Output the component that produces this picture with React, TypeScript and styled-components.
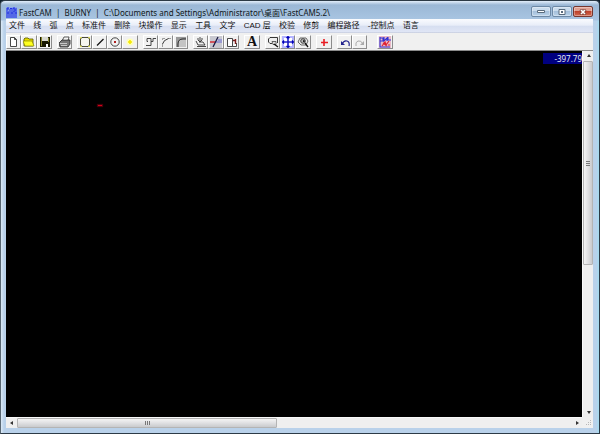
import React from "react";
import styled, { createGlobalStyle, css } from "styled-components";

const GlobalStyle = createGlobalStyle`
  * { box-sizing: border-box; }
  html, body, #root { height: 100%; margin: 0; }
  body {
    background: #10202c;
    overflow: hidden;
    font-family: "Noto Sans", "Noto Sans CJK SC", sans-serif;
  }
  button { font: inherit; padding: 0; margin: 0; }
`;

const Window = styled.div`
  height: 100%;
  display: flex;
  flex-direction: column;
  padding: 0 6px 5px 5px;
  border: 1px solid #2c3a46;
  border-left-color: #5a6873;
  border-radius: 5px 5px 0 0;
  background:
    linear-gradient(#e2eefa, #9bb8d6 4px, #a9c5e2 19px, transparent 20px) top / 100% 20px no-repeat,
    linear-gradient(90deg, #dceaf7 0, #b9d1ea 3px, #b9d1ea calc(100% - 3px), #a5dcf0 100%);
`;

const TitleBar = styled.header`
  flex: none;
  height: 18px;
  display: flex;
  align-items: center;
`;

const Title = styled.h1`
  flex: 1;
  min-width: 0;
  margin: 4px 0 0 2px;
  overflow: hidden;
  white-space: pre;
  font-size: 8px;
  line-height: 13px;
  font-weight: 400;
  color: #101820;
`;

const Logo = styled.svg`
  flex: none;
  width: 11px;
  height: 11px;
  margin-top: 4px;
`;

const Controls = styled.div`
  display: flex;
  gap: 1px;
  margin-top: 3px;
`;

const ControlButton = styled.button<{ $close?: boolean }>`
  width: 20px;
  height: 11px;
  display: flex;
  align-items: center;
  justify-content: center;
  border: 1px solid #6d89a6;
  border-radius: 2px;
  box-shadow: inset 0 0 0 1px #ffffff55;
  background: linear-gradient(#c9dcee 45%, #a6c0db 50%, #b9d2e9);
  ${(p) => p.$close && css`
    border-color: #77372f;
    background: linear-gradient(#e0a092 45%, #bd422c 50%, #d2694f);
  `}
`;

const Menu = styled.nav`
  flex: none;
  height: 14px;
  background: linear-gradient(#fafbfe, #e8edf8 45%, #d6def0 50%, #dfe5f5 90%, #c4cadb);
`;

const MenuList = styled.div`
  max-width: 417px;
  padding: 0 4px 0 3px;
  display: flex;
  justify-content: space-between;
`;

const MenuItem = styled.button`
  border: 0;
  background: none;
  font-family: "Liberation Sans", "Noto Sans CJK SC", sans-serif;
  font-size: 8px;
  line-height: 13px;
  white-space: nowrap;
  color: #101010;
`;

const Toolbar = styled.div`
  flex: none;
  height: 18px;
  padding: 2px 0;
  display: flex;
  align-items: flex-start;
  gap: 5px;
  background: #f0f0f0;
  border-bottom: 1px solid #8a8a8a;
`;

const ToolGroup = styled.div<{ $apart?: boolean }>`
  display: flex;
  margin-left: ${(p) => (p.$apart ? 5 : 0)}px;
`;

const ToolButton = styled.button<{ $wide?: boolean }>`
  width: ${(p) => (p.$wide ? 16 : 15)}px;
  height: 14px;
  display: flex;
  align-items: center;
  justify-content: center;
  background: #f1f1f1;
  border: 1px solid;
  border-color: #ffffff #8c8c8c #8c8c8c #ffffff;

  svg { flex: none; width: 12px; height: 12px; }
`;

const Letter = styled.span`
  font: 700 14px/12px "Liberation Serif", serif;
  color: #111;
`;

const Workspace = styled.main`
  flex: 1;
  min-height: 0;
  display: grid;
  grid-template-columns: minmax(0, 1fr) 11px;
  grid-template-rows: minmax(0, 1fr) 11px;
  background: #f0f0f0;
`;

const Drawing = styled.section`
  position: relative;
  overflow: hidden;
  background: #000;
`;

const Readout = styled.output`
  position: absolute;
  top: 2px;
  right: 0;
  width: 39px;
  height: 11px;
  text-align: right;
  white-space: nowrap;
  background: #000080;
  color: #e8e8f0;
  font: 8px/11px "Noto Sans", sans-serif;
`;

const CursorMark = styled.i`
  position: absolute;
  left: 92px;
  top: 54px;
  width: 4px;
  height: 1px;
  background: #d00018;
  box-shadow: 0 0 1px 1px #50000a;
`;

const ScrollBar = styled.div<{ $vertical?: boolean }>`
  display: flex;
  flex-direction: ${(p) => (p.$vertical ? "column" : "row")};
  border: 0 solid #fafafa;
  border-width: ${(p) => (p.$vertical ? "0 0 0 1px" : "1px 0 0 0")};
  background: #efefef;
`;

const ScrollArrow = styled.button`
  flex: none;
  width: 11px;
  height: 10px;
  display: flex;
  align-items: center;
  justify-content: center;
  border: 0;
  background: none;
`;

const Track = styled.div<{ $vertical?: boolean }>`
  flex: 1;
  display: flex;
  flex-direction: ${(p) => (p.$vertical ? "column" : "row")};
`;

const Thumb = styled.div<{ $vertical?: boolean }>`
  display: flex;
  align-items: center;
  justify-content: center;
  border: 1px solid #b4b4b4;
  border-radius: 1px;
  ${(p) => p.$vertical
    ? css`height: 59%; width: 10px; background: linear-gradient(90deg, #f4f4f4, #e2e2e4 45%, #c9cacd);`
    : css`width: 47%; height: 10px; background: linear-gradient(#f4f4f4, #e2e2e4 45%, #c9cacd);`}
`;

const Grip = styled.svg`
  flex: none;
  width: 5px;
  height: 5px;
`;

const SizeGrip = styled.svg`
  width: 11px;
  height: 11px;
`;

type Tool = { name: string; wide?: boolean; letter?: string; art?: React.ReactNode };

const GROUPS: { apart?: boolean; tools: Tool[] }[] = [
  {
    tools: [
      { name: "新建", art: <path d="M2.500 1.500h4l2 2v7h-6zM6.500 1.500v2h2" fill="#fff" stroke="#333" strokeWidth=".9" /> },
      {
        name: "打开", wide: true,
        art: <><path d="M1 3l1-1h3l1 1h4v7H1z" fill="#e6dc00" stroke="#555500" strokeWidth=".8" /><path d="M0 5h9l2 5H2z" fill="#ffff20" stroke="#777700" strokeWidth=".6" /></>,
      },
      {
        name: "保存",
        art: <><path d="M1 1h10v10H1z" fill="#181800" /><path d="M3 1h6v4H3z" fill="#d8d8d0" /><path d="M2 1h1v9H2zM9 2h1v4H9z" fill="#85852c" /><path d="M7 8h2v3H7z" fill="#fff" /></>,
      },
    ],
  },
  {
    tools: [{
      name: "打印",
      art: <><path d="M3 5l2-4h5L9 5" fill="#fff" stroke="#333" strokeWidth=".8" /><path d="M0 7l3-3h8v4l-2 3H1z" fill="#777" stroke="#222" strokeWidth=".8" /><path d="M1 7.500h7M2 9.500h6M5 3h3" stroke="#ddd" strokeWidth=".8" /></>,
    }],
  },
  {
    tools: [
      { name: "矩形", art: <><path d="M1 1h10v10H1z" fill="#e8e85a" /><path d="M3 1.500h6L10.500 3v6L9 10.500H3L1.500 9V3z" fill="#f6f6ee" stroke="#222" strokeWidth=".8" /></> },
      { name: "直线", art: <path d="M3 9.500L9.500 3" fill="none" stroke="#111" strokeWidth="1.300" /> },
      { name: "圆", art: <><circle cx="6" cy="6" r="4.200" fill="none" stroke="#333" strokeWidth=".9" /><path d="M5 5h2v2H5z" fill="#b02020" /></> },
      { name: "点", wide: true, art: <><circle cx="6" cy="6" r="3.500" fill="#ffffb4" /><path d="M6 4v4M4 6h4" stroke="#f4e800" strokeWidth="1.600" /></> },
    ],
  },
  {
    tools: [
      { name: "台阶", art: <path d="M1 9.500h5v-4h2V2.500h3M2 5.500V2.500h4v3M2 5.500h1" fill="none" stroke="#333" strokeWidth=".9" /> },
      { name: "圆弧", art: <><path d="M2.500 11V8M2.500 4V2.500H5M8 2.500h3" fill="none" stroke="#888" strokeWidth=".8" /><path d="M2.500 8q1-4 6-5.500" fill="none" stroke="#222" strokeWidth=".9" /></> },
      { name: "圆角", art: <><path d="M1 11V1h10v2H8Q3 3 3 8v3z" fill="#999" /><path d="M3 11V8q0-5 5-5h3v8z" fill="#c4c4c4" /><path d="M3 11V8q0-5 5-5h3" fill="none" stroke="#222" /></> },
    ],
  },
  {
    tools: [
      { name: "手形", art: <><path d="M5 1v5M3 2v2l2 2 2-2V2M1 5l2 4h7L8 6H4" fill="none" stroke="#333" strokeWidth=".9" /><path d="M2 10.500h9" stroke="#333" strokeWidth=".9" /></> },
      { name: "修剪", wide: true, art: <><path d="M0 0h12v12H0z" fill="#c9c9d1" /><path d="M0 6h5" stroke="#d32c35" strokeWidth="1.500" /><path d="M6 6h6M8 4h4" stroke="#6b6bd1" /><path d="M3 11L8 1" stroke="#171740" strokeWidth="1.300" /></> },
      { name: "输出", art: <><path d="M1.500 2.500h5v8h-5zM6.500 10.500h4V7" fill="#fff" stroke="#333" strokeWidth=".9" /><path d="M7 4.500h3M9.500 3v5" stroke="#7d1c1c" strokeWidth="1.400" /></> },
    ],
  },
  { tools: [{ name: "文字", wide: true, letter: "A" }] },
  {
    tools: [
      { name: "窗口缩放", art: <><path d="M5 7.500H3L1.500 6V3L3 1.500h7.500V7" fill="#eee" stroke="#222" strokeWidth=".9" /><path d="M5 5.500h4v3H6z" fill="#ddd" stroke="#444" strokeWidth=".8" /><path d="M7 8l4 3" stroke="#111" strokeWidth="1.300" /></> },
      { name: "全部显示", art: <><path d="M0 0h12v12H0z" fill="#b4b4ff" /><path d="M2 2h3v3H2zM7 2h3v3H7zM2 7h3v3H2zM7 7h3v3H7z" fill="#fff" /><path d="M6 0v12M0 6h12M4.500 2L6 .5 7.500 2M4.500 10L6 11.500 7.500 10M2 4.500L.5 6 2 7.500M10 4.500L11.500 6 10 7.500" fill="none" stroke="#0000b5" strokeWidth="1.200" /></> },
      { name: "缩放", wide: true, art: <><path d="M1 6l2-4h6l2 3-2 4H4z" fill="#eee" stroke="#444" strokeWidth=".8" /><circle cx="6" cy="5" r="2.300" fill="#bbb" stroke="#333" strokeWidth=".9" /><path d="M6 5h1v1M8 7l3 4" stroke="#111" strokeWidth="1.300" fill="none" /></> },
    ],
  },
  {
    tools: [{ name: "十字", wide: true, art: <path d="M6 3v7M3 6.500h7" stroke="#e81c23" strokeWidth="1.600" /> }],
  },
  {
    tools: [
      { name: "撤销", art: <><path d="M2 5v4h4z" fill="#21218d" /><path d="M3 8q2-4 5-3t2 5" fill="none" stroke="#21218d" strokeWidth="1.200" /></> },
      { name: "重做", art: <><path d="M10 5v4H6z" fill="#aaa" /><path d="M9 8Q7 4 4 5T2 10" fill="none" stroke="#aaa" /></> },
    ],
  },
  {
    apart: true,
    tools: [{
      name: "切割", wide: true,
      art: <><path d="M0 0h12v12H0z" fill="#e9b9c7" /><path d="M1 1v10h10M1 2h3v3H1M5 1v4l3-3v3M9 1v3h3" fill="none" stroke="#3333d3" strokeWidth="1.100" /><path d="M3 10l3-4 1 3 3-4M4 7l4 3M9 9h2" fill="none" stroke="#df2030" strokeWidth="1.200" /></>,
    }],
  },
];

const MENUS = ["文件", "线", "弧", "点", "标准件", "删除", "块操作", "显示", "工具", "文字", "CAD 层", "校验", "修剪", "编程路径", "-控制点", "语言"];

const ARROWS = {
  up: "M3 6l2-3 2 3z",
  down: "M3 4l2 3 2-3z",
  left: "M6 3L3 5l3 2z",
  right: "M4 3l3 2-3 2z",
};

const Arrow = ({ to, label }: { to: keyof typeof ARROWS; label: string }) => (
  <ScrollArrow aria-label={label}>
    <svg width="10" height="10"><path d={ARROWS[to]} fill="#333" /></svg>
  </ScrollArrow>
);

const GripLines = ({ vertical }: { vertical?: boolean }) => (
  <Grip viewBox="0 0 5 5">
    <path d={vertical ? "M0 .5h4M0 2.500h4M0 4.500h4" : "M.5 0v4M2.500 0v4M4.500 0v4"} stroke="#777" />
  </Grip>
);

export default function App() {
  return (
    <>
      <GlobalStyle />
      <Window>
        <TitleBar>
          <Logo viewBox="0 0 11 11">
            <path d="M0 0h11v11H0z" fill="#8ba4ed" />
            <path d="M1 4V1h2M1 2h2M4 4V2l1-1 1 1v2M9 1H7v1h2v2H7M10 1v3M1 11V6h2v5M5 11V6h2v5M9 11V6h2v5M0 5h11" fill="none" stroke="#1f2fe0" />
          </Logo>
          <Title>{"FastCAM  |  BURNY  |  C:\\Documents and Settings\\Administrator\\桌面\\FastCAM5.2\\"}</Title>
          <Controls>
            <ControlButton aria-label="最小化">
              <svg width="8" height="5"><path d="M.5 1.500h7v2h-7z" fill="#fff" stroke="#596b7d" /></svg>
            </ControlButton>
            <ControlButton aria-label="最大化">
              <svg width="8" height="6"><path d="M1 .5h6v5H1z" fill="#fff" stroke="#596b7d" /><path d="M3 2h2v2H3z" fill="#596b7d" /></svg>
            </ControlButton>
            <ControlButton $close aria-label="关闭">
              <svg width="8" height="6"><path d="M1.500 .5l5 5M6.500 .5l-5 5" stroke="#7b4038" strokeWidth="3" /><path d="M2 1l4 4M6 1L2 5" stroke="#fff" strokeWidth="1.700" /></svg>
            </ControlButton>
          </Controls>
        </TitleBar>
        <Menu>
          <MenuList>{MENUS.map((m) => <MenuItem key={m}>{m}</MenuItem>)}</MenuList>
        </Menu>
        <Toolbar role="toolbar">
          {GROUPS.map((g, i) => (
            <ToolGroup key={i} $apart={g.apart}>
              {g.tools.map((t) => (
                <ToolButton key={t.name} $wide={t.wide} aria-label={t.name}>
                  {t.letter ? <Letter>{t.letter}</Letter> : <svg viewBox="0 0 12 12">{t.art}</svg>}
                </ToolButton>
              ))}
            </ToolGroup>
          ))}
        </Toolbar>
        <Workspace>
          <Drawing>
            <CursorMark />
            <Readout>-397.79</Readout>
          </Drawing>
          <ScrollBar $vertical>
            <Arrow to="up" label="向上滚动" />
            <Track $vertical><Thumb $vertical><GripLines vertical /></Thumb></Track>
            <Arrow to="down" label="向下滚动" />
          </ScrollBar>
          <ScrollBar>
            <Arrow to="left" label="向左滚动" />
            <Track><Thumb><GripLines /></Thumb></Track>
            <Arrow to="right" label="向右滚动" />
          </ScrollBar>
          <SizeGrip viewBox="0 0 11 11"><path d="M8 3h1v1H8zM6 5h1v1H6zM8 5h1v1H8zM4 7h1v1H4zM6 7h1v1H6zM8 7h1v1H8z" fill="#b8b8b8" /></SizeGrip>
        </Workspace>
      </Window>
    </>
  );
}
